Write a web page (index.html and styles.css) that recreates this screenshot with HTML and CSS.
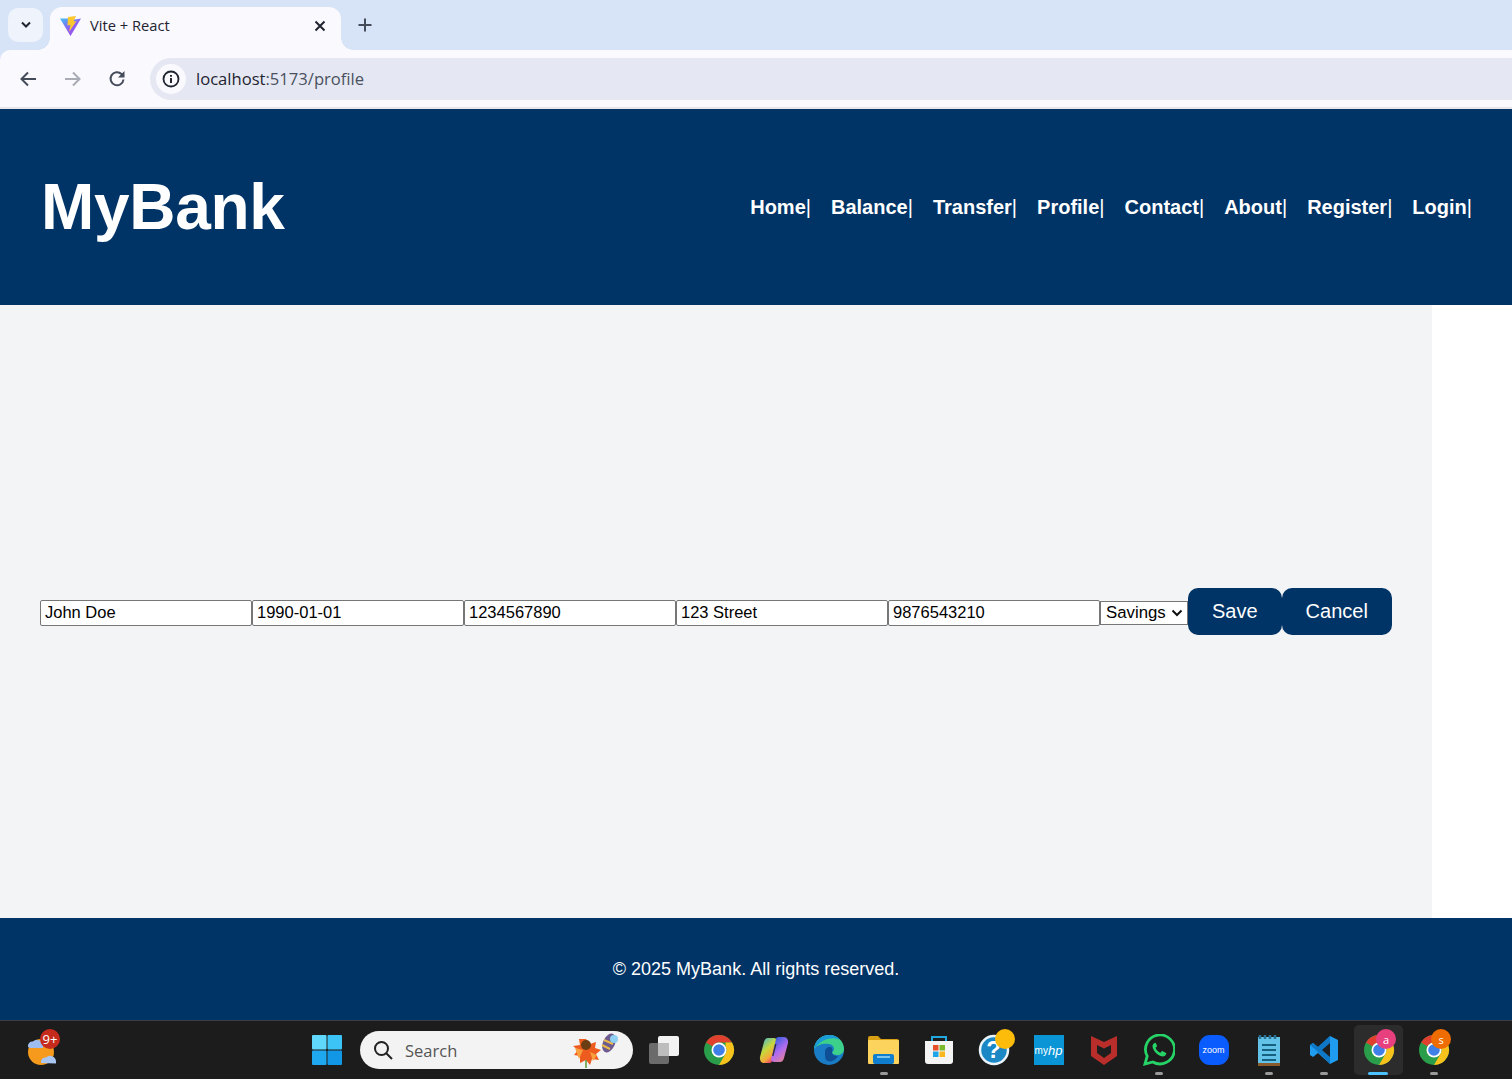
FILE: index.html
```html
<!DOCTYPE html>
<html lang="en">
<head>
  <meta charset="UTF-8" />
  <title>Vite + React</title>
  <link rel="stylesheet" href="styles.css">
</head>
<body>
  <svg class="defs" width="0" height="0">
    <symbol id="chrome" viewBox="0 0 32 32">
      <circle cx="16" cy="16" r="15" fill="#2a9d4a"/>
      <path d="M3 8.500A15 15 0 0 1 29 8.500L16 8.500A7.500 7.500 0 0 0 9.500 12.200Z" fill="#e2402f"/>
      <path d="M29 8.500A15 15 0 0 1 16 31L22.500 19.700A7.500 7.500 0 0 0 22.500 12.200L22.500 8.500Z" fill="#f8c21c"/>
      <circle cx="16" cy="16" r="7.500" fill="#fff"/>
      <circle cx="16" cy="16" r="5.800" fill="#3f7fe8"/>
    </symbol>
  </svg>

  <div class="browser">
    <div class="tabstrip">
      <button class="tab-list">
        <svg width="12" height="8" viewBox="0 0 12 8"><path d="M2 1.500l4 4 4-4" fill="none" stroke="#1f2430" stroke-width="2"/></svg>
      </button>
      <div class="tab">
        <svg class="favicon" width="21" height="20" viewBox="0 0 21 20">
          <defs><linearGradient id="vite" x1="0" y1="0" x2=".7" y2="1"><stop offset="0" stop-color="#41c0f5"/><stop offset=".55" stop-color="#8a63f5"/><stop offset="1" stop-color="#a04cf0"/></linearGradient></defs>
          <path d="M0 2.500l10.500 17.500L21 2.500l-6 1-4.500-1z" fill="url(#vite)"/>
          <path d="M8 1l8-1-2.500 5.500 3-.5L9 16l1.500-7-3 .5z" fill="#fdc72e"/>
        </svg>
        <span class="tab-title">Vite + React</span>
        <svg class="tab-close" width="12" height="12" viewBox="0 0 12 12"><path d="M1.500 1.500l9 9m0-9l-9 9" stroke="#1f2430" stroke-width="2"/></svg>
      </div>
      <svg class="new-tab" width="14" height="14" viewBox="0 0 14 14"><path d="M7 .5v13M.5 7h13" stroke="#444b59" stroke-width="2"/></svg>
    </div>

    <div class="toolbar">
      <svg class="nav-icon" width="18" height="16" viewBox="0 0 18 16"><path d="M17 8H2.500M9 1.500L2.500 8 9 14.500" fill="none" stroke="#444b59" stroke-width="2"/></svg>
      <svg class="nav-icon" width="18" height="16" viewBox="0 0 18 16"><path d="M1 8h14.500M9 1.500L15.500 8 9 14.500" fill="none" stroke="#a9acb4" stroke-width="2"/></svg>
      <svg class="nav-icon" width="18" height="18" viewBox="0 0 18 18"><path d="M15.500 9.500A6.500 6.500 0 1 1 13.500 4L15.500 6" fill="none" stroke="#444b59" stroke-width="2"/><path d="M16.500 1v6.500H10z" fill="#444b59"/></svg>
      <div class="omnibox">
        <span class="site-info">
          <svg width="18" height="18" viewBox="0 0 18 18"><circle cx="9" cy="9" r="7.500" fill="none" stroke="#1f2430" stroke-width="1.800"/><path d="M9 8v5M9 5v1.800" stroke="#1f2430" stroke-width="2"/></svg>
        </span>
        <span class="url">localhost<span class="url-rest">:5173/profile</span></span>
      </div>
    </div>
  </div>

  <header class="site-header">
    <h1 class="logo">MyBank</h1>
    <nav class="site-nav">
      <span><a>Home</a>|</span>
      <span><a>Balance</a>|</span>
      <span><a>Transfer</a>|</span>
      <span><a>Profile</a>|</span>
      <span><a>Contact</a>|</span>
      <span><a>About</a>|</span>
      <span><a>Register</a>|</span>
      <span><a>Login</a>|</span>
    </nav>
  </header>

  <main class="page">
    <form class="profile-form">
      <input type="text" value="John Doe" />
      <input type="text" value="1990-01-01" />
      <input type="text" value="1234567890" />
      <input type="text" value="123 Street" />
      <input type="text" value="9876543210" />
      <select><option>Savings</option></select>
      <button type="button" class="btn">Save</button>
      <button type="button" class="btn">Cancel</button>
    </form>
  </main>

  <footer class="site-footer">© 2025 MyBank. All rights reserved.</footer>

  <div class="taskbar">
    <div class="slot slot-weather">
      <svg width="36" height="36" viewBox="0 0 36 36">
        <circle cx="15" cy="20" r="13" fill="#f59a1c"/>
        <path d="M2 15a4.500 4.500 0 0 1 5-5.500 6 6 0 0 1 10 3.500v3H4z" fill="#9dbdf0"/>
        <path d="M15 31a4.500 4.500 0 0 1 5-5.500 6 6 0 0 1 10 3.500v2.500z" fill="#a9c6f2"/>
      </svg>
      <span class="badge badge-red">9+</span>
    </div>
    <div class="slot slot-start">
      <svg width="30" height="30" viewBox="0 0 30 30">
        <rect width="14.500" height="14.500" rx="1" fill="#5fd8fb"/><rect x="15.500" width="14.500" height="14.500" rx="1" fill="#3cc4f7"/>
        <rect y="15.500" width="14.500" height="14.500" rx="1" fill="#1fa8ef"/><rect x="15.500" y="15.500" width="14.500" height="14.500" rx="1" fill="#1297e6"/>
      </svg>
    </div>
    <div class="search">
      <svg width="20" height="20" viewBox="0 0 20 20"><circle cx="8.500" cy="8.500" r="6.500" fill="none" stroke="#222" stroke-width="2"/><path d="M13 13l6 6" stroke="#222" stroke-width="2"/></svg>
      <span class="search-text">Search</span>
      <svg class="search-art" width="50" height="40" viewBox="0 0 50 40">
        <path d="M16 9l4 5 6-2-1 6 6 2-5 4 3 6-7-1-2 6-4-5-6 3 0-7-6-1 4-5-5-4 7-1-1-6z" fill="#ee5b1e"/>
        <path d="M5 18l8 2-4 9zM27 25l-7-3 3 9z" fill="#f8a03c"/>
        <circle cx="16" cy="15" r="5" fill="#6b3d12"/><path d="M16 30v8" stroke="#5a9a35" stroke-width="1.500"/>
        <ellipse cx="39" cy="13" rx="6" ry="10" transform="rotate(25 39 13)" fill="#6d5a8e"/>
        <path d="M34 10l9 4M32 15l8 4" stroke="#e9b949" stroke-width="2"/>
        <circle cx="44" cy="9" r="4" fill="#8fd0f5"/>
      </svg>
    </div>
    <div class="slot">
      <svg width="32" height="30" viewBox="0 0 32 30"><rect x="1" y="8" width="20" height="21" rx="2" fill="#6b6b6b"/><rect x="10" y="1" width="21" height="20" rx="2" fill="#f2f2f2"/><rect x="10" y="8" width="11" height="13" fill="#bdbdbd"/></svg>
    </div>
    <div class="slot"><svg width="32" height="32"><use href="#chrome"/></svg></div>
    <div class="slot">
      <svg width="30" height="30" viewBox="0 0 30 30">
        <defs>
          <linearGradient id="cop-l" x1="0" y1="0" x2=".6" y2="1"><stop offset="0" stop-color="#2fb4e8"/><stop offset=".5" stop-color="#c8d83b"/><stop offset=".8" stop-color="#f5a83b"/><stop offset="1" stop-color="#e8456b"/></linearGradient>
          <linearGradient id="cop-r" x1=".4" y1="0" x2="1" y2="1"><stop offset="0" stop-color="#3f5fe0"/><stop offset=".45" stop-color="#b06cf0"/><stop offset="1" stop-color="#f58a7b"/></linearGradient>
        </defs>
        <path d="M9 3h6c1.500 0 3 1 2.800 3L13 26c-.3 1.500-1.500 2-3 2H5c-3 0-4.500-3-4-6L5 7c.7-2.500 2-4 4-4z" fill="url(#cop-l)"/>
        <path d="M21 27h-6c-1.500 0-3-1-2.800-3L17 4c.3-1.500 1.500-2 3-2h5c3 0 4.500 3 4 6l-4 15c-.7 2.500-2 4-4 4z" fill="url(#cop-r)"/>
        <path d="M16 9l-3 12h1.500l3-12z" fill="#1e1e1e" opacity=".8"/>
      </svg>
    </div>
    <div class="slot">
      <svg width="32" height="32" viewBox="0 0 32 32">
        <circle cx="16" cy="16" r="15" fill="#1a7cc4"/>
        <path d="M1 15C2 6 9 1 16 1c8 0 15 6 15 14 0 4-3 6-7 6-3 0-5-1-5-3 3-1 3-7-3-8-7-1-12 1-15 5z" fill="#3dd08a"/>
        <path d="M1 15C2 6 9 1 16 1c5 0 9 2 11 5-6-3-17-3-26 9z" fill="#1a9ad6"/>
        <path d="M12 18c0-3 2-5 5-5 2 0 3 2 2 5 0 3 3 4 6 4-3 5-8 7-12 4-1-2-1-5-1-8z" fill="#0f4f96"/>
      </svg>
    </div>
    <div class="slot slot-open">
      <svg width="31" height="28" viewBox="0 0 31 28">
        <path d="M0 2a2 2 0 0 1 2-2h8l3 3h16a2 2 0 0 1 2 2v3H0z" fill="#d9a013"/>
        <rect y="4" width="31" height="24" rx="1" fill="#fcd35c"/>
        <rect x="5" y="18" width="21" height="10" rx="2" fill="#0f7ecf"/>
        <rect x="9" y="20" width="13" height="2" fill="#7cc4f0"/>
      </svg>
    </div>
    <div class="slot">
      <svg width="30" height="30" viewBox="0 0 30 30">
        <path d="M8 6V2h14v4" fill="none" stroke="#22a7e0" stroke-width="2"/>
        <path d="M1 6h28v20a3 3 0 0 1-3 3H4a3 3 0 0 1-3-3z" fill="#f4f4f4"/>
        <rect x="9" y="10" width="5.500" height="5.500" fill="#e8502a"/><rect x="15.500" y="10" width="5.500" height="5.500" fill="#7cb82c"/>
        <rect x="9" y="16.500" width="5.500" height="5.500" fill="#20a4e8"/><rect x="15.500" y="16.500" width="5.500" height="5.500" fill="#fbb81c"/>
      </svg>
    </div>
    <div class="slot">
      <svg width="32" height="32" viewBox="0 0 32 32"><circle cx="16" cy="16" r="14" fill="#1b87c4" stroke="#eaf4fa" stroke-width="2.500"/></svg>
      <span class="help-mark">?</span>
      <span class="badge badge-yellow"></span>
    </div>
    <div class="slot">
      <span class="myhp"><span>my</span><i>hp</i></span>
    </div>
    <div class="slot">
      <svg width="28" height="30" viewBox="0 0 28 30"><path d="M1 1l13 6 13-6v20L14 30 1 21z" fill="#b92e2a"/><path d="M7 10l7 3.500 7-3.500v8l-7 5-7-5z" fill="#1e1e1e"/></svg>
    </div>
    <div class="slot slot-open">
      <svg width="32" height="32" viewBox="0 0 32 32">
        <path d="M2 30l2.200-7.800A14.500 14.500 0 1 1 9.800 28z" fill="none" stroke="#25d366" stroke-width="2.800"/>
        <path d="M11.500 9c-2 1-2.500 3-1.500 5.500 1.500 3.500 4 6 7.500 7.500 2.500 1 4.500.5 5.500-1.500.5-1 .3-1.500-.3-1.800l-3-1.500c-.5-.2-1-.1-1.200.3l-1 1.200c-2.500-1-4-2.500-5-5l1.200-1c.4-.4.400-.8.200-1.200L13 9.500c-.3-.6-.8-.8-1.500-.5z" fill="#25d366"/>
      </svg>
    </div>
    <div class="slot">
      <span class="zoom">zoom</span>
    </div>
    <div class="slot slot-open">
      <svg width="24" height="31" viewBox="0 0 24 31">
        <rect x="1" y="2" width="22" height="26" fill="#62c2e8"/>
        <rect x="1" y="28" width="22" height="3" fill="#8a5a2b"/>
        <path d="M3 0v4M8 0v4M13 0v4M18 0v4" stroke="#2a6f94" stroke-width="2.500"/>
        <path d="M5 10h14M5 15h14M5 20h14M5 25h14" stroke="#16607f" stroke-width="2"/>
      </svg>
    </div>
    <div class="slot slot-open">
      <svg width="30" height="30" viewBox="0 0 30 30">
        <path d="M21 1l8 4v20l-8 4-12-11-5 4-3-2v-10l3-2 5 4z" fill="#1f9cf0"/>
        <path d="M21 1L9 12 4 8 1 10l6 5L21 29z" fill="#0a6fbd" opacity=".8"/>
        <path d="M21 8l-8 7 8 7z" fill="#1e1e1e"/>
      </svg>
    </div>
    <div class="slot slot-active">
      <svg width="32" height="32"><use href="#chrome"/></svg>
      <span class="badge badge-pink">a</span>
    </div>
    <div class="slot slot-open">
      <svg width="32" height="32"><use href="#chrome"/></svg>
      <span class="badge badge-orange">s</span>
    </div>
  </div>
</body>
</html>
```

FILE: styles.css
```css
html, body {
  margin: 0;
  padding: 0;
  height: 100%;
  overflow: hidden;
}
body {
  display: flex;
  flex-direction: column;
  font-family: "Liberation Sans", Arial, sans-serif;
  background: #fff;
}
.defs {
  position: absolute;
}

/* browser chrome */
.browser {
  flex: none;
  background: #d7e3f6;
}
.tabstrip {
  height: 50px;
  display: flex;
  align-items: flex-end;
  padding-left: 8px;
  box-sizing: border-box;
}
.tab-list {
  width: 35px;
  height: 34px;
  margin-bottom: 8px;
  border: none;
  padding: 0;
  border-radius: 10px;
  background: #eef3fc;
  display: flex;
  align-items: center;
  justify-content: center;
}
.tab {
  position: relative;
  width: 291px;
  height: 43px;
  margin-left: 7px;
  background: #f9f9fe;
  border-radius: 12px 12px 0 0;
  display: flex;
  align-items: center;
  padding: 0 15px 6px 10px;
  box-sizing: border-box;
}
.tab::before,
.tab::after {
  content: "";
  position: absolute;
  bottom: 0;
  width: 12px;
  height: 12px;
}
.tab::before {
  left: -12px;
  background: radial-gradient(circle at 0 0, transparent 11.500px, #f9f9fe 12px);
}
.tab::after {
  right: -12px;
  background: radial-gradient(circle at 100% 0, transparent 11.500px, #f9f9fe 12px);
}
.favicon {
  flex: none;
}
.tab-title {
  margin: 0 0 2px 9px;
  font: 14.700px "Open Sans", sans-serif;
  color: #1f2430;
  flex: 1;
}
.new-tab {
  margin: 0 0 18px 17px;
}
.toolbar {
  height: 59px;
  box-sizing: border-box;
  background: #f9f9fe;
  border-bottom: 2px solid #e6e6ea;
  border-radius: 10px 0 0 0;
  display: flex;
  align-items: center;
  padding: 0 0 0 19px;
  gap: 26.500px;
}
.nav-icon {
  flex: none;
}
.omnibox {
  flex: 1;
  height: 42px;
  margin-left: -2.500px;
  background: #e5e8f2;
  border-radius: 21px 0 0 21px;
  display: flex;
  align-items: center;
  padding-left: 6px;
}
.site-info {
  width: 30px;
  height: 30px;
  border-radius: 50%;
  background: #f9f9fe;
  display: flex;
  align-items: center;
  justify-content: center;
}
.url {
  margin-left: 10px;
  font: 16.600px "Open Sans", sans-serif;
  color: #1f2430;
}
.url-rest {
  color: #4a5060;
}

/* app */
.site-header {
  height: 196px;
  flex: none;
  background: #003366;
  color: #fff;
  display: flex;
  align-items: center;
  justify-content: space-between;
  padding: 0 40px;
}
.logo {
  margin: 0 0 0 1px;
  font-size: 64px;
  font-weight: bold;
  letter-spacing: -0.3px;
}
.site-nav {
  display: flex;
  gap: 20px;
  font-size: 20px;
}
.site-nav a {
  font-weight: bold;
}
.page {
  flex: 1;
  width: 1432px;
  box-sizing: border-box;
  background: #f3f4f6;
  padding: 0 40px;
  display: flex;
  align-items: center;
}
.profile-form {
  display: flex;
  align-items: center;
  margin-top: 3px;
}
.profile-form input {
  width: 212px;
  height: 26px;
  box-sizing: border-box;
  border: 1px solid #767676;
  border-radius: 2px;
  padding: 0 4px 2px;
  background: #fff;
  color: #000;
  font: 16.500px "Liberation Sans", Arial, sans-serif;
  margin: 0;
}
.profile-form select {
  appearance: none;
  width: 88px;
  height: 24px;
  box-sizing: border-box;
  font: 16.800px "Liberation Sans", Arial, sans-serif;
  color: #000;
  background: #fff url("data:image/svg+xml,%3Csvg xmlns='http://www.w3.org/2000/svg' width='12' height='8'%3E%3Cpath d='M1.500 1.500l4.500 4.500 4.500-4.500' fill='none' stroke='%23111' stroke-width='2'/%3E%3C/svg%3E") no-repeat right 4px center;
  border: 1px solid #767676;
  border-radius: 0;
  padding: 0 0 2px 5px;
  margin: 0;
}
.btn {
  height: 47px;
  padding: 0 24px;
  margin: 0 0 3px;
  border: none;
  border-radius: 10px;
  background: #003366;
  color: #fff;
  font: 20px "Liberation Sans", Arial, sans-serif;
}
.site-footer {
  height: 102px;
  flex: none;
  background: #003366;
  color: #fff;
  font-size: 18px;
  display: flex;
  align-items: center;
  justify-content: center;
}

/* windows taskbar */
.taskbar {
  height: 59px;
  flex: none;
  box-sizing: border-box;
  background: #1c1c1c;
  border-top: 1px solid #3a4048;
  display: flex;
  align-items: center;
  padding-left: 15px;
}
.slot {
  position: relative;
  width: 55px;
  height: 58px;
  flex: none;
  display: flex;
  align-items: center;
  justify-content: center;
}
.slot-weather svg {
  margin-left: 3px;
}
.slot-start {
  margin-left: 229px;
}
.slot-open::after,
.slot-active::after {
  content: "";
  position: absolute;
  left: 24px;
  bottom: 4px;
  width: 8px;
  height: 3px;
  border-radius: 2px;
  background: #9a9a9a;
}
.slot-active::before {
  content: "";
  position: absolute;
  left: 3px;
  top: 4px;
  width: 49px;
  height: 50px;
  border-radius: 5px;
  background: #2c2c2c;
}
.slot-active svg {
  position: relative;
}
.slot-active::after {
  left: 17px;
  width: 20px;
  background: #4cc2ff;
}
.search {
  width: 273px;
  height: 38px;
  flex: none;
  margin: 0 3px 0 6px;
  border-radius: 19px;
  background: #f3f3f3;
  box-sizing: border-box;
  padding: 0 13px;
  display: flex;
  align-items: center;
}
.search-text {
  margin-left: 12px;
  font: 16.500px "Open Sans", sans-serif;
  color: #555;
  flex: 1;
}
.badge {
  position: absolute;
  border-radius: 50%;
  color: #fff;
  display: flex;
  align-items: center;
  justify-content: center;
  font: 13px "Open Sans", sans-serif;
}
.badge-red {
  top: 8px;
  left: 25px;
  width: 20px;
  height: 20px;
  background: #c42b1c;
}
.badge-yellow {
  top: 8px;
  left: 29px;
  width: 20px;
  height: 20px;
  background: #fdbb0a;
}
.badge-pink {
  top: 8px;
  left: 25px;
  width: 20px;
  height: 20px;
  background: #e8407f;
  font-size: 11px;
}
.badge-orange {
  top: 8px;
  left: 25px;
  width: 20px;
  height: 20px;
  background: #ef6c00;
  font-size: 11px;
}
.help-mark {
  position: absolute;
  color: #fff;
  font-size: 24px;
  font-weight: bold;
}
.myhp {
  width: 30px;
  height: 30px;
  background: #0a96d6;
  color: #fff;
  font-size: 10px;
  display: flex;
  align-items: center;
  justify-content: center;
}
.myhp i {
  font-size: 13px;
}
.zoom {
  width: 30px;
  height: 30px;
  border-radius: 11px;
  background: #0b5cff;
  color: #fff;
  font-size: 9px;
  display: flex;
  align-items: center;
  justify-content: center;
}
```
